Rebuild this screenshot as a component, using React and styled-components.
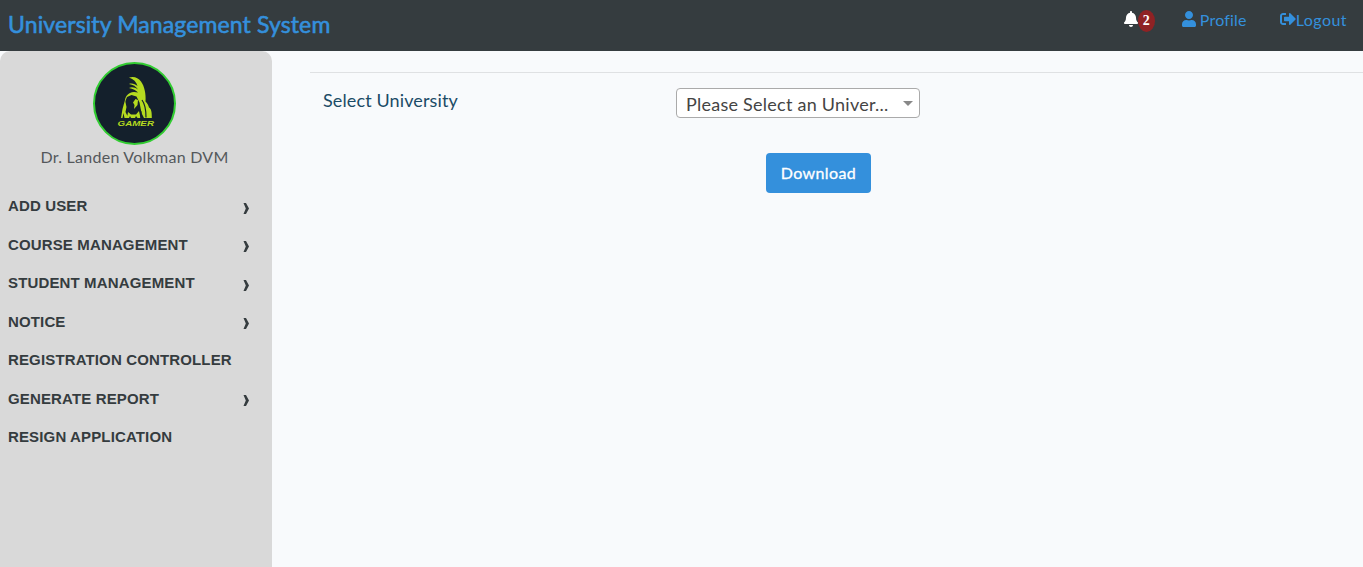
import React from 'react';
import styled, { createGlobalStyle } from 'styled-components';
import { FaBell, FaUser, FaSignOutAlt } from 'react-icons/fa';

const GlobalStyle = createGlobalStyle`
  * { box-sizing: border-box; }
  body { margin: 0; background: #f8fafc; font-family: Lato, "Open Sans", sans-serif; font-size: 16px; color: #212529; overflow: hidden; }
`;

const Page = styled.div`
  display: flex;
  flex-direction: column;
  height: 100vh;
`;

const Header = styled.header`
  display: flex;
  justify-content: space-between;
  flex: 0 0 51px;
  background: #353c3f;
  padding: 0 16px 0 8px;
`;

const Brand = styled.a`
  color: #3490dc;
  font-size: 23px;
  line-height: 48px;
  font-weight: 400;
  -webkit-text-stroke: 0.6px #3490dc;
  letter-spacing: ${(p) => p.$track}px;
  white-space: nowrap;
`;

const TopLinks = styled.nav`
  display: flex;
  height: 40px;
  align-items: center;
`;

const TopLink = styled.a`
  display: flex;
  align-items: center;
  gap: ${(p) => p.$gap || 0}px;
  margin-left: ${(p) => p.$before || 0}px;
  color: #3490dc;
  line-height: 24px;
  letter-spacing: ${(p) => p.$track || 0}px;
  white-space: nowrap;
  svg { display: block; margin-bottom: 2px; flex: none; }
`;

const Bell = styled.span`
  display: flex;
  align-items: center;
  color: #fff;
  svg { display: block; margin-bottom: 2px; }
`;

const Count = styled.span`
  width: 17px;
  height: 22px;
  margin: 1px 0 0 -1px;
  border-radius: 50%;
  background: #8f2224;
  font: bold 14px/22px "Liberation Serif", serif;
  text-align: center;
`;

const Body = styled.div`
  display: flex;
  flex: 1;
  min-height: 0;
`;

const Sidebar = styled.aside`
  flex: 0 0 272px;
  background: #d9d9d9;
  border-radius: 10px 10px 0 0;
  padding-top: 11px;
`;

const Person = styled.div`
  display: flex;
  flex-direction: column;
  align-items: center;
  width: 269px;
`;

const Avatar = styled.div`
  width: 83px;
  height: 83px;
  border: 2px solid #32cd32;
  border-radius: 50%;
  background: #14202c;
  overflow: hidden;
  svg { display: block; }
`;

const Name = styled.div`
  height: 24px;
  line-height: 24px;
  color: #54585b;
  letter-spacing: ${(p) => p.$track}px;
  white-space: nowrap;
`;

const Menu = styled.ul`
  list-style: none;
  margin: 18px 0 0;
  padding: 0 22px 0 8px;
`;

const MenuItem = styled.li`
  display: flex;
  justify-content: space-between;
  align-items: center;
  height: 38.5px;
  color: #353c3f;
  font: bold 15px/20px "Liberation Sans", Arial, sans-serif;
  letter-spacing: 0.14px;
`;

const Chevron = styled.svg`
  width: 6px;
  height: 11px;
  margin: 4px 1px 0 0;
  fill: currentColor;
`;

const Main = styled.main`
  flex: 1;
  padding: 21px 0 0 38px;
`;

const FormArea = styled.div`
  border-top: 1px solid #dfe1e3;
  padding: 15px 0 0 13px;
`;

const Field = styled.div`
  display: grid;
  grid-template-columns: 353px 244px;
`;

const Label = styled.label`
  color: #1b4b66;
  font-size: 18px;
  line-height: 25px;
  letter-spacing: ${(p) => p.$track}px;
`;

const Select = styled.div`
  display: flex;
  justify-content: space-between;
  align-items: center;
  height: 30px;
  border: 1px solid #aaa;
  border-radius: 4px;
  background: #fff;
  padding: 2px 6px 0 9px;
  color: #444;
  font-size: 18px;
  letter-spacing: ${(p) => p.$track}px;
  white-space: nowrap;
`;

const Caret = styled.span`
  border: 5px solid transparent;
  border-top-color: #888;
  border-bottom: 0;
  margin-bottom: 2px;
`;

const Button = styled.button`
  display: block;
  width: 105px;
  height: 40px;
  margin: 35px 0 0 443px;
  padding: 0;
  border: 0;
  border-radius: 4px;
  background: #3490dc;
  color: #fff;
  font: 400 16px/40px Lato, sans-serif;
  -webkit-text-stroke: 0.3px #fff;
  letter-spacing: ${(p) => p.$track}px;
`;

const items = [
  ['ADD USER', true],
  ['COURSE MANAGEMENT', true],
  ['STUDENT MANAGEMENT', true],
  ['NOTICE', true],
  ['REGISTRATION CONTROLLER', false],
  ['GENERATE REPORT', true],
  ['RESIGN APPLICATION', false],
];

function GamerLogo() {
  return (
    <svg width="79" height="79" viewBox="0 0 79 79" fill="#b5da20">
      <path d="M34 13.5c5-1.5 9 0 12 4 3.500 5 5 12 4.500 20 2 2 3 4 3.500 6 2 1 3 4 2.800 10.500H49l-2.500-5-2-10.500-3-6-5-1.500-4.500 2-2 5c-.5-5 3-9.500 9-10l4 .5c-2-2-5-4-9-4.500 3-1.500 6-.5 9 1.500-2-3-5-5-9-5.500 3-1 6 0 8.500 2-1-4-4-7-8.500-8.500z" />
      <path d="M30 36l1.500 7-1 5 3 6h-4l-1-5-1 5h-1.500l1.500-9zM40.500 35l2.500 1-.5 5-3.500 4 .5-4-1.500-2.500zM33 48l3 2.500h5l3-3.500 1.500 7h-3l-1.500-2-1 2h-4l-1-2-1 2h-2z" />
      <path d="M47 36c3 4 4 9 4 17.500M43.500 44l2.500 4v6" fill="none" stroke="#14202c" strokeWidth="1.200" />
      <text x="22.500" y="61.500" fontFamily="Liberation Sans, sans-serif" fontWeight="bold" fontStyle="italic" fontSize="8" textLength="36.500" lengthAdjust="spacingAndGlyphs">GAMER</text>
    </svg>
  );
}

export default function App() {
  return (
    <Page>
      <GlobalStyle />
      <Header>
        <Brand $track={0.12}>University Management System</Brand>
        <TopLinks>
          <Bell><FaBell size={16} /><Count>2</Count></Bell>
          <TopLink $before={26} $gap={3} $track={0.2}><FaUser size={16} />Profile</TopLink>
          <TopLink $before={33} $track={0.45}><FaSignOutAlt size={16} />Logout</TopLink>
        </TopLinks>
      </Header>
      <Body>
        <Sidebar>
          <Person>
            <Avatar><GamerLogo /></Avatar>
            <Name $track={0.26}>Dr. Landen Volkman DVM</Name>
          </Person>
          <Menu>
            {items.map(([label, open]) => (
              <MenuItem key={label}>
                {label}
                {open && <Chevron viewBox="0 0 6 11"><path d="M.5 0H3l3 5.500L3 11H.5l2.300-5.500z" /></Chevron>}
              </MenuItem>
            ))}
          </Menu>
        </Sidebar>
        <Main>
          <FormArea>
            <Field>
              <Label $track={0.12}>Select University</Label>
              <Select $track={0.25}>Please Select an Univer...<Caret /></Select>
            </Field>
            <Button $track={0.4}>Download</Button>
          </FormArea>
        </Main>
      </Body>
    </Page>
  );
}
